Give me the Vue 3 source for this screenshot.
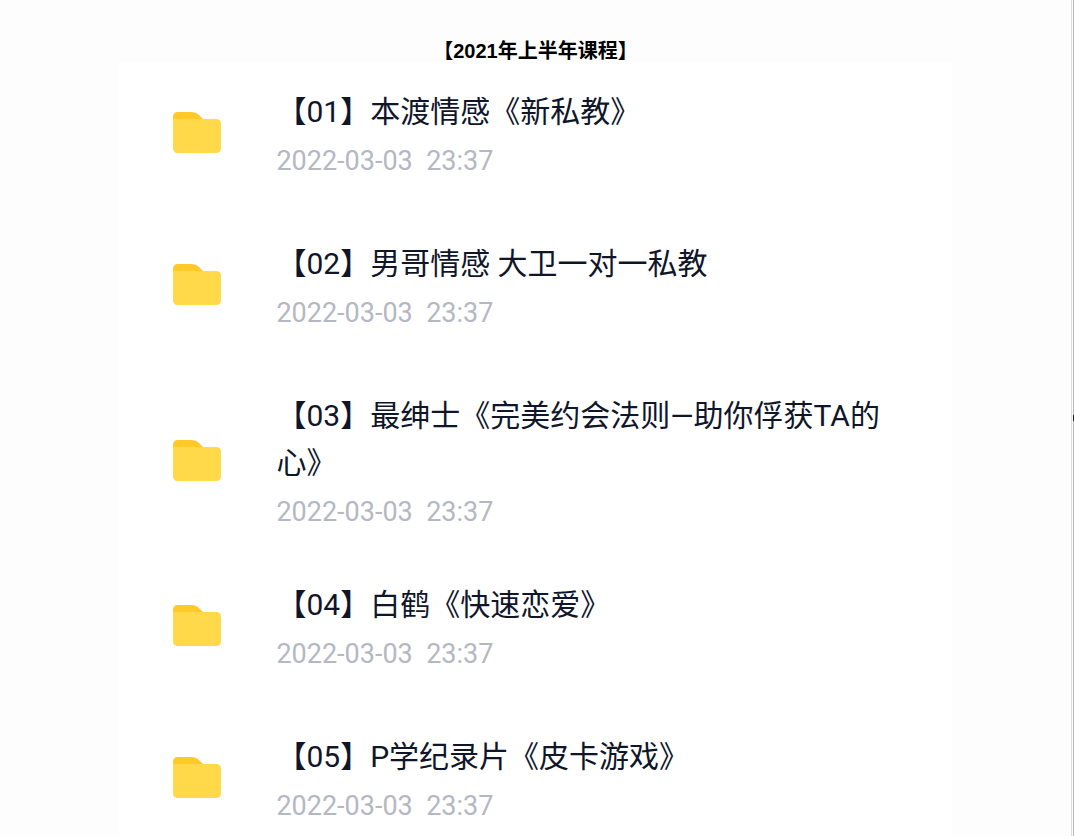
<script setup>
const courses = [
  { id: '01', title: '【01】本渡情感《新私教》', time: '2022-03-03  23:37' },
  { id: '02', title: '【02】男哥情感 大卫一对一私教', time: '2022-03-03  23:37' },
  { id: '03', title: '【03】最绅士《完美约会法则—助你俘获TA的心》', time: '2022-03-03  23:37', tall: true },
  { id: '04', title: '【04】白鹤《快速恋爱》', time: '2022-03-03  23:37' },
  { id: '05', title: '【05】P学纪录片《皮卡游戏》', time: '2022-03-03  23:37' },
]
</script>

<template>
  <div class="page">
    <main class="content">
      <h1 class="heading">【2021年上半年课程】</h1>
      <ul class="panel">
        <li v-for="c in courses" :key="c.id" class="row" :class="{ tall: c.tall }">
          <svg class="folder" viewBox="0 0 48 42" aria-hidden="true">
            <path d="M0 12V5Q0 0 5 0H19Q23 0 26 3L30 7V12Z" fill="#ffc928" />
            <path d="M0 7H43Q48 7 48 12V36Q48 41 43 41H5Q0 41 0 36Z" fill="#ffd94a" />
          </svg>
          <div class="info">
            <div class="title">{{ c.title }}</div>
            <time class="time">{{ c.time }}</time>
          </div>
        </li>
      </ul>
    </main>
    <div class="rail"><span class="thumb"></span></div>
  </div>
</template>

<style>
body {
  margin: 0;
  background: #fdfdfd;
}
</style>

<style scoped>
.page {
  display: flex;
  height: 100vh;
  overflow: hidden;
}
.content {
  flex: 1;
  min-width: 0;
  padding-top: 39px;
}
.heading {
  margin: 0;
  color: #000;
  font: bold 20px/24px "Liberation Sans", "Noto Sans CJK SC", sans-serif;
  text-align: center;
}
.panel {
  box-sizing: border-box;
  width: 77.7%;
  margin: 0 auto;
  padding: 25px 54px 0;
  background: #fff;
  list-style: none;
}
.row {
  display: flex;
  align-items: center;
  gap: 55px;
  padding-bottom: 53px;
}
.row.tall {
  padding-bottom: 43px;
}
.folder {
  flex: none;
  width: 48px;
  height: 42px;
  margin-bottom: 9px;
}
.info {
  flex: 1;
  min-width: 0;
  font-family: Roboto, "Noto Sans CJK SC", sans-serif;
}
.title {
  color: #10162a;
  font-size: 30px;
  line-height: 47px;
}
.time {
  display: block;
  color: #b5b8c4;
  font-size: 27px;
  line-height: 52px;
  white-space: pre;
}
.rail {
  box-sizing: border-box;
  display: flex;
  align-items: center;
  width: 3px;
  border-left: 1px solid #dcdcdc;
  border-right: 1px solid #b8b8b8;
}
.thumb {
  flex: none;
  width: 1px;
  height: 6px;
  margin-left: 1px;
  background: #1a1a1a;
}
</style>
